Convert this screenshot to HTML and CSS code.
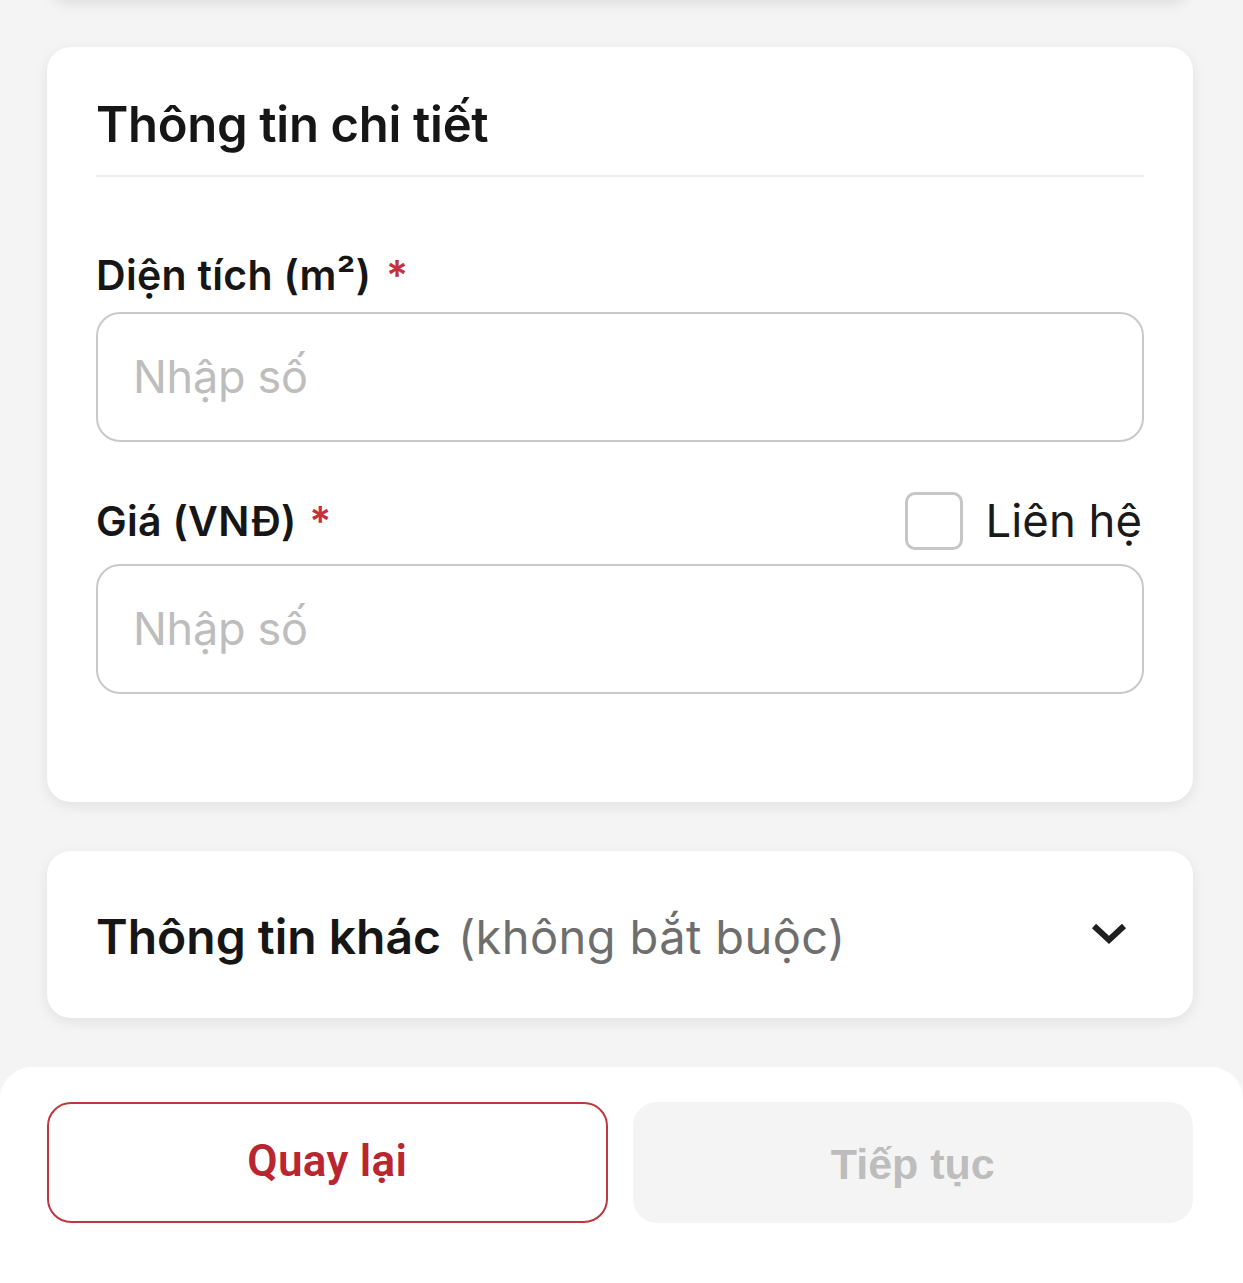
FILE: index.html
```html
<!DOCTYPE html>
<html lang="vi">
<head>
<meta charset="utf-8">
<title>Thông tin chi tiết</title>
<link rel="stylesheet" href="styles.css">
</head>
<body>
<div class="page">
  <div class="prev-card"></div>
  <div class="content">
    <section class="card details">
      <h2 class="card-title">Thông tin chi tiết</h2>
      <div class="field first">
        <div class="label-row">
          <label class="label">Diện tích (m²) <span class="req">*</span></label>
        </div>
        <div class="input"><span class="placeholder">Nhập số</span></div>
      </div>
      <div class="field second">
        <div class="label-row">
          <label class="label">Giá (VNĐ) <span class="req req-tight">*</span></label>
          <div class="contact">
            <span class="checkbox"></span>
            <span class="contact-text">Liên hệ</span>
          </div>
        </div>
        <div class="input"><span class="placeholder">Nhập số</span></div>
      </div>
    </section>
    <section class="card other">
      <div class="other-text">
        <span class="other-title">Thông tin khác</span>
        <span class="other-sub">(không bắt buộc)</span>
      </div>
      <svg class="chevron" width="40" height="26" viewBox="0 0 40 26">
        <polyline points="5,5 20,19 35,5" fill="none" stroke="#1f1f1f" stroke-width="6" stroke-linejoin="miter"/>
      </svg>
    </section>
  </div>
  <footer class="bottom-bar">
    <button class="btn btn-back">Quay lại</button>
    <button class="btn btn-next">Tiếp tục</button>
  </footer>
</div>
</body>
</html>
```
FILE: styles.css
```css
html, body {
  margin: 0;
  padding: 0;
}
body {
  background: #f4f4f4;
  font-family: Inter, "Noto Sans", sans-serif;
  color: #161616;
  overflow: hidden;
}
.page {
  width: 1243px;
  height: 1283px;
  display: flex;
  flex-direction: column;
  overflow: hidden;
}
.prev-card {
  margin: -60px 50px 0 47px;
  height: 60px;
  flex: none;
  background: #fff;
  border-radius: 0 0 24px 24px;
  box-shadow: 0 4px 14px rgba(0, 0, 0, 0.09);
}
.content {
  padding: 47px 50px 0 47px;
  display: flex;
  flex-direction: column;
  gap: 49px;
}
.card {
  background: #fff;
  border-radius: 24px;
  box-shadow: 0 4px 14px rgba(0, 0, 0, 0.08);
}
.details {
  padding: 45px 49px 108px;
}
.card-title {
  margin: 0;
  font-size: 49px;
  line-height: 66px;
  font-weight: 600;
  padding-bottom: 17px;
  border-bottom: 2px solid #eeeeee;
  letter-spacing: -0.3px;
}
.field.first {
  margin-top: 73px;
}
.field.second {
  margin-top: 50px;
}
.label-row {
  display: flex;
  align-items: center;
  justify-content: space-between;
  min-height: 50px;
}
.field.first .label-row {
  margin-bottom: 12px;
}
.field.second .label-row {
  margin-bottom: 14px;
  height: 58px;
}
.label {
  font-size: 41px;
  line-height: 50px;
  font-weight: 600;
  letter-spacing: 0.3px;
}
.req {
  color: #c4313a;
  margin-left: 4px;
}
.req-tight {
  margin-left: 2px;
}
.contact {
  display: flex;
  align-items: center;
  gap: 23px;
}
.checkbox {
  border: 3px solid #c6c6c6;
  border-radius: 10px;
  box-sizing: content-box;
  width: 52px;
  height: 52px;
}
.contact-text {
  font-size: 45.5px;
  line-height: 56px;
  color: #1a1a1a;
  margin-right: 2px;
}
.input {
  height: 126px;
  border: 2px solid #c9c9c9;
  border-radius: 24px;
  display: flex;
  align-items: center;
  padding-left: 35px;
}
.placeholder {
  font-size: 45px;
  color: #bdbdbd;
  line-height: 56px;
  letter-spacing: -0.3px;
}
.other {
  height: 167px;
  padding: 0 49px;
  display: flex;
  align-items: center;
  justify-content: space-between;
}
.other-text {
  display: flex;
  align-items: baseline;
  gap: 17px;
  margin-top: 4px;
}
.other-title {
  font-size: 48px;
  font-weight: 600;
  line-height: 60px;
}
.other-sub {
  font-size: 47px;
  color: #6e6e6e;
  line-height: 60px;
  letter-spacing: 0.4px;
}
.chevron {
  margin-right: 15px;
  margin-top: -2px;
}
.bottom-bar {
  margin-top: 49px;
  flex: 1;
  background: #fff;
  border-radius: 32px 32px 0 0;
  padding: 35px 50px 0 47px;
  display: flex;
  gap: 25px;
  align-items: flex-start;
}
.btn {
  flex: 1 1 0;
  min-width: 0;
  height: 121px;
  border-radius: 24px;
  font-weight: 700;
  cursor: pointer;
  box-sizing: border-box;
  padding: 0;
  border: 2px solid transparent;
}
.btn-back {
  background: #fff;
  border-color: #bf3840;
  color: #b9262f;
  font-family: Roboto, sans-serif;
  font-size: 44px;
  font-weight: 600;
  letter-spacing: 0.3px;
  padding-bottom: 4px;
}
.btn-next {
  background: #f4f4f4;
  border-color: #f4f4f4;
  color: #bdbdbd;
  font-family: "Liberation Sans", Arial, sans-serif;
  font-size: 43px;
  padding-top: 4px;
}
```
